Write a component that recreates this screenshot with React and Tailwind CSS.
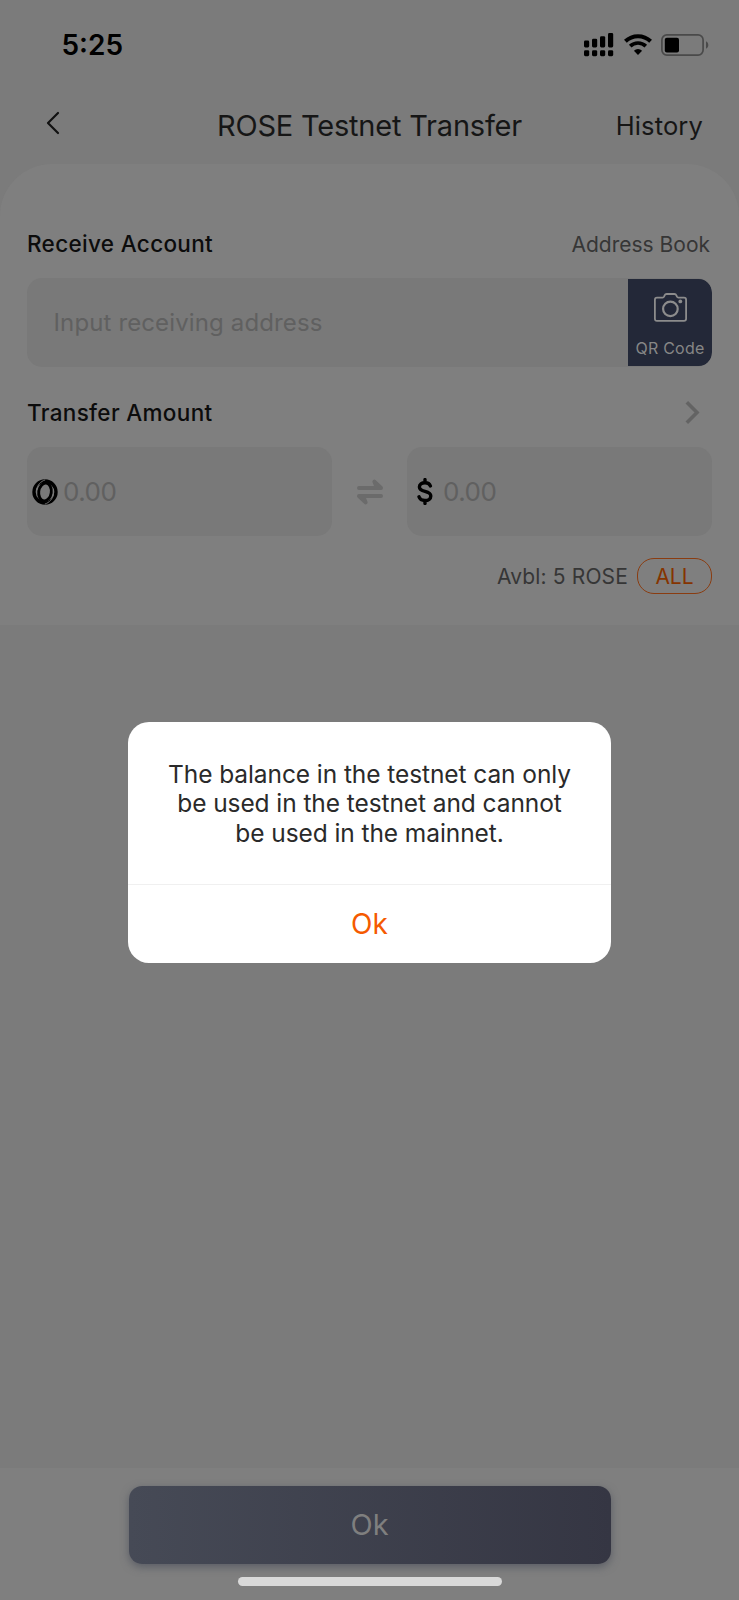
import React from "react";

function SignalIcon() {
  return (
    <svg width="30" height="24" viewBox="0 0 30 24" fill="#000">
      <rect x="0" y="7.5" width="5.2" height="7" rx="1.4" />
      <rect x="8" y="5.7" width="5.2" height="8.8" rx="1.4" />
      <rect x="16" y="3.2" width="5.2" height="11.3" rx="1.4" />
      <rect x="24" y="0" width="5.2" height="14.5" rx="1.4" />
      <rect x="0" y="17.2" width="5.2" height="6" rx="1.4" />
      <rect x="8" y="17.2" width="5.2" height="6" rx="1.4" />
      <rect x="16" y="17.2" width="5.2" height="6" rx="1.4" />
      <rect x="24" y="17.2" width="5.2" height="6" rx="1.4" />
    </svg>
  );
}

function WifiIcon() {
  return (
    <svg width="28" height="21" viewBox="0 0 28 21" fill="none" stroke="#000">
      <path d="M1.4 7.2A18.2 18.2 0 0 1 26.6 7.2" strokeWidth="4" />
      <path d="M6.2 12.1A11.4 11.4 0 0 1 21.8 12.1" strokeWidth="3.7" />
      <path d="M14 21L9.9 16.7A6 6 0 0 1 18.1 16.7Z" fill="#000" stroke="none" />
    </svg>
  );
}

function BatteryIcon() {
  return (
    <svg width="48" height="22" viewBox="0 0 48 22" fill="none">
      <rect x="0.9" y="0.9" width="41.2" height="20.2" rx="5" stroke="#4a4a4a" strokeWidth="1.7" />
      <rect x="3.8" y="3.8" width="14.2" height="14.6" rx="2" fill="#000" />
      <path d="M45 7.2C46.5 8 47.3 9.4 47.3 11S46.5 14 45 14.8Z" fill="#4a4a4a" />
    </svg>
  );
}

function CameraIcon() {
  return (
    <svg width="33" height="29" viewBox="0 0 33 29" fill="none" stroke="#8c8c8c" strokeWidth="1.8">
      <path d="M3 4.6H8.6Q9.6 4.6 10.2 3.4L10.6 2.3Q11.2 1 12.6 1H20.4Q21.8 1 22.4 2.3L22.8 3.4Q23.4 4.6 24.4 4.6H30Q32.1 4.6 32.1 6.7V25.8Q32.1 27.9 30 27.9H3Q0.9 27.9 0.9 25.8V6.7Q0.9 4.6 3 4.6Z" />
      <circle cx="16.4" cy="15.9" r="7.3" strokeWidth="2.2" />
      <circle cx="26.3" cy="8.4" r="1.9" fill="#8c8c8c" stroke="none" />
    </svg>
  );
}

function RoseLogo() {
  return (
    <svg width="26" height="26" viewBox="0 0 26 26" fill="none" stroke="#000">
      <circle cx="13" cy="13" r="11" strokeWidth="3.4" />
      <ellipse cx="13" cy="13" rx="6.3" ry="8.9" strokeWidth="2.9" transform="rotate(8 13 13)" />
      <path d="M13.2 0.9C8.6 2.4 5.2 6 4.5 11.5M12.8 25.1C17.4 23.6 20.8 20 21.5 14.5" stroke="#797979" strokeWidth="0.9" />
    </svg>
  );
}

function SwapIcon() {
  return (
    <svg width="26" height="26" viewBox="0 0 26 26" fill="none" stroke="#6b6b6b" strokeWidth="4" strokeLinecap="round" strokeLinejoin="round">
      <path d="M2 9H24L17.4 2.6L19.5 8" />
      <path d="M24 17H2L8.6 23.4L6.5 18" />
    </svg>
  );
}

function AmountInput({ children }) {
  return (
    <div className="flex h-[89px] w-[305px] items-center rounded-[15px] bg-[#797979]">{children}</div>
  );
}

export default function App() {
  return (
    <div className="relative flex h-[1600px] w-[739px] flex-col overflow-hidden bg-[#7b7b7b] font-['Inter','Liberation_Sans',sans-serif] text-[#161616]">
      <div className="flex h-[89px] shrink-0 items-center justify-between pl-[61.5px] pr-[30px]">
        <span className="text-[28px] font-semibold leading-none text-black">5:25</span>
        <div className="flex items-center">
          <SignalIcon />
          <span className="ml-[10px] mr-[9px]"><WifiIcon /></span>
          <BatteryIcon />
        </div>
      </div>
      <div className="grid h-[75px] shrink-0 grid-cols-[180px_1fr_180px] items-center whitespace-nowrap">
        <svg className="ml-[46px] mt-[-7px]" width="14" height="24" viewBox="0 0 14 24" fill="none" stroke="#111" strokeWidth="2.2" strokeLinecap="round" strokeLinejoin="round">
          <path d="M12 2L2 12L12 22" />
        </svg>
        <h1 className="mt-[-3px] text-center text-[29px] leading-none tracking-[-0.2px]">ROSE Testnet Transfer</h1>
        <span className="mt-[-2px] pr-[36px] text-right text-[25.5px] leading-none tracking-[0.15px]">History</span>
      </div>

      <div className="flex h-[461px] shrink-0 flex-col rounded-t-[52px] bg-[#7f7f7f] px-[27px] pt-[64px] whitespace-nowrap">
        <div className="flex h-[32px] items-center justify-between pr-[2px]">
          <span className="text-[22.5px] font-medium leading-none tracking-[0.33px] text-[#0c0c0c]">Receive Account</span>
          <span className="text-[21px] leading-none text-[#363636]">Address Book</span>
        </div>
        <div className="mt-[18px] flex h-[89px] items-center justify-between overflow-hidden rounded-[15px] bg-[#797979]">
          <span className="pl-[26.5px] text-[24px] leading-none tracking-[0.13px] text-[#606060]">Input receiving address</span>
          <div className="flex h-[87px] w-[84px] flex-col items-center rounded-r-[13px] bg-[#232838] pt-[14px]">
            <CameraIcon />
            <span className="mt-[17.5px] text-[16px] leading-none tracking-[0.2px] text-[#868686]">QR Code</span>
          </div>
        </div>
        <div className="mt-[30px] flex h-[32px] items-center justify-between pr-[12px]">
          <span className="text-[22.5px] font-medium leading-none tracking-[0.33px] text-[#0c0c0c]">Transfer Amount</span>
          <svg width="15" height="24" viewBox="0 0 15 24" fill="none" stroke="#636363" strokeWidth="3.6">
            <path d="M1.8 1.3L12 11.5L1.8 21.7" />
          </svg>
        </div>
        <div className="mt-[18px] flex items-center justify-between">
          <AmountInput>
            <span className="ml-[5px]"><RoseLogo /></span>
            <span className="ml-[5px] pt-px text-[26px] leading-none tracking-[-0.5px] text-[#606060]">0.00</span>
          </AmountInput>
          <SwapIcon />
          <AmountInput>
            <svg className="ml-[10px]" width="16" height="27" viewBox="0 0 16 27" fill="none" stroke="#000" strokeWidth="3.4" strokeLinecap="round">
              <path d="M13.4 8C12.6 5.6 10.5 4.7 8 4.7C4.6 4.7 2.4 6.3 2.4 8.9C2.4 14.8 13.8 11.8 13.8 17.9C13.8 20.8 11.4 22.5 8 22.5C5 22.5 2.8 21.3 2 18.8M8 1.6V4.5M8 22.5V25.4" />
            </svg>
            <span className="ml-[10px] pt-px text-[26px] leading-none tracking-[-0.5px] text-[#606060]">0.00</span>
          </AmountInput>
        </div>
        <div className="mt-[22px] flex items-center justify-end gap-[9px]">
          <span className="text-[21px] leading-none tracking-[0.15px] text-[#363636]">Avbl: 5 ROSE</span>
          <span className="flex h-[36px] w-[75px] items-center justify-center rounded-[17px] border border-[#8a3c10] text-[21px] leading-none text-[#853400]">ALL</span>
        </div>
      </div>

      <div className="mt-auto flex h-[132px] shrink-0 flex-col items-center bg-[#7f7f7f] pt-[18px]">
        <div className="flex h-[78px] w-[482px] items-center justify-center rounded-[13px] bg-linear-to-r from-[#464a56] to-[#353643] text-[29px] text-[#7f7f7f] shadow-[0_3px_8px_rgba(60,65,80,0.55)]">Ok</div>
        <div className="mt-[13px] h-[9px] w-[264px] rounded-full bg-[#d9d9d9]" />
      </div>

      <div className="absolute left-[128px] top-[722px] flex h-[241px] w-[483px] flex-col rounded-[21px] bg-white text-center">
        <p className="h-[162px] whitespace-nowrap pt-[37.5px] text-[24.5px] leading-[29.5px] tracking-[-0.08px] text-[#2a2a2a]">
          The balance in the testnet can only
          <br />
          be used in the testnet and cannot
          <br />
          be used in the mainnet.
        </p>
        <div className="flex flex-1 items-center justify-center border-t border-[#f0f0f0] text-[28px] text-[#f55a00]">Ok</div>
      </div>
    </div>
  );
}
